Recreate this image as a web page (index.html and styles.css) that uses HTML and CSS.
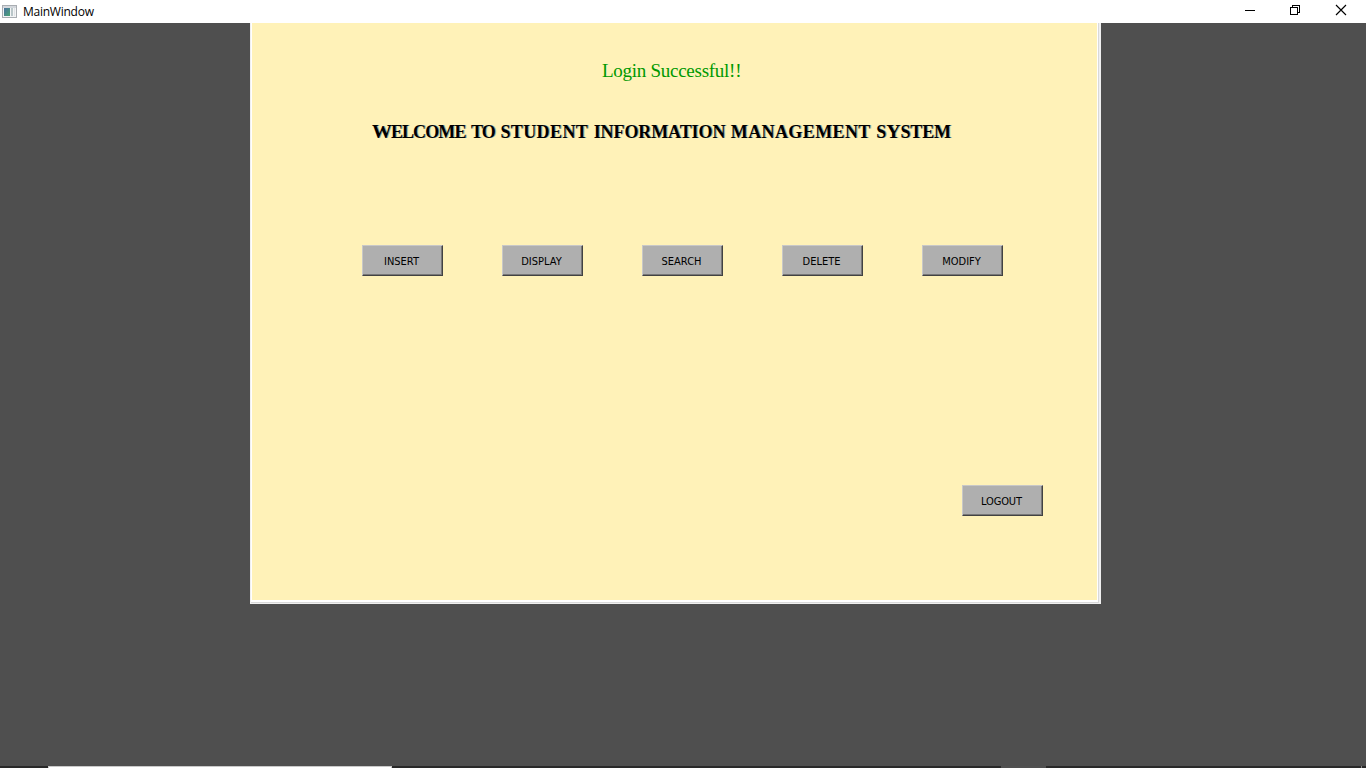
FILE: index.html
```html
<!DOCTYPE html>
<html lang="en">
<head>
<meta charset="utf-8">
<title>MainWindow</title>
<link rel="stylesheet" href="styles.css">
</head>
<body>
<div class="window">
  <header class="titlebar">
    <svg class="app-icon" width="16" height="14" viewBox="0 0 16 14" shape-rendering="crispEdges">
      <defs><linearGradient id="app" x1="0" y1="0" x2="1" y2="1"><stop offset="0" stop-color="#4a6f9f"/><stop offset="1" stop-color="#4aa574"/></linearGradient></defs>
      <path fill="#a9adb2" d="M0 0h15v13H0z"/><path fill="#f3f4f5" d="M1 1h13v11H1z"/><path fill="#d3d7dc" d="M1 1h13v2H1z"/>
      <path fill="url(#app)" d="M2 3h6v8H2z"/><path fill="#b9c6c9" d="M9 3h2v8H9z"/><path fill="#dfe3e6" d="M12 3h1v8h-1z"/>
    </svg>
    <span class="title">MainWindow</span>
    <div class="controls">
      <svg width="46" height="23" shape-rendering="crispEdges"><path fill="#000" d="M15 10h10v1H15z"/></svg>
      <svg width="46" height="23" fill="none" stroke="#000" shape-rendering="crispEdges"><path d="M14.500 7.500h7v7h-7zM16.500 7v-1.500h7v7H22"/></svg>
      <svg width="46" height="23" fill="none" stroke="#000" stroke-width="1.150"><path d="M14 5l10 10M24 5L14 15"/></svg>
    </div>
  </header>
  <main class="desktop">
    <section class="panel">
      <div class="frame">
        <p class="status">Login Successful!!</p>
        <h1 class="welcome"><span class="tight"><span class="swash">W</span>ELCOME</span> <span class="tight">TO</span> <span class="wide">STUDENT</span> <span class="even">INFORMATION</span> <span class="wide">MANAGEMENT</span> <span class="even">S<span class="swash">Y</span>STEM</span></h1>
        <nav class="actions">
          <button>INSERT</button><button>DISPLAY</button><button>SEARCH</button><button>DELETE</button><button>MODIFY</button>
        </nav>
        <button class="logout">LOGOUT</button>
      </div>
    </section>
  </main>
  <footer class="taskbar"><div class="search"></div><div class="task"></div><div class="divider"></div></footer>
</div>
</body>
</html>
```
FILE: styles.css
```css
* { box-sizing: border-box; }
body { margin: 0; overflow: hidden; }
.window { width: 1366px; height: 768px; display: flex; flex-direction: column; background: #4f4f4f; }
.titlebar { height: 23px; flex: none; display: flex; background: #fff; }
.app-icon { margin: 5px 5px 0 2px; }
.title { font: 12px/23px "Open Sans", "Noto Sans", sans-serif; letter-spacing: -.25px; color: #000; white-space: nowrap; }
.controls { display: flex; margin-left: auto; margin-right: -2px; }
.desktop { flex: 1; min-height: 0; }
.panel { width: 851px; height: 581px; margin-left: 250px; border: solid #f0f0f0; border-width: 0 2px 1px 1px; background: linear-gradient(#d9d9d9, #d9d9d9) left bottom / 100% 1px no-repeat; }
.frame { height: 579px; margin-right: 1px; display: flex; flex-direction: column; background: #fff2b8; border: solid #fff; border-width: 0 1px 2px 1px; box-shadow: 1px 0 #d9d9d9; }
.status { margin: 34px 0 0 350px; height: 28px; font: 19px/28px "Liberation Serif", serif; letter-spacing: -.27px; color: #009900; white-space: nowrap; }
.welcome { display: flex; gap: 5.500px; margin: 33px 0 0 120px; height: 28px; font: bold 18px/28px "Liberation Serif", serif; color: #000; text-shadow: 1px 0 #98aaa0; white-space: nowrap; }
.tight { letter-spacing: -.9px; }
.even { letter-spacing: -.1px; }
.wide { letter-spacing: .4px; }
.swash { font-size: 1.100em; line-height: 1; }
.actions { display: flex; gap: 59px; margin: 99px 0 0 110px; }
button { width: 81px; height: 31px; padding: 2px 2px 0 0; border: 1px solid; border-color: #c8c8c8 #424242 #424242 #c8c8c8; border-radius: 0; background: #afafaf; box-shadow: inset -1px -1px #787878; font: 11px/27px "DejaVu Sans Condensed", sans-serif; letter-spacing: 0; color: #000; }
.logout { margin: 209px 0 0 710px; letter-spacing: -.15px; }
.taskbar { height: 2px; flex: none; display: flex; background: #292929; }
.search { width: 344px; margin-left: 48px; background: #fff; border: 1px solid #c9c9c9; border-bottom: 0; }
.task { width: 45px; margin-left: 609px; background: #505050; }
.divider { width: 1px; margin-left: 315px; background: #8a8a8a; }
```
